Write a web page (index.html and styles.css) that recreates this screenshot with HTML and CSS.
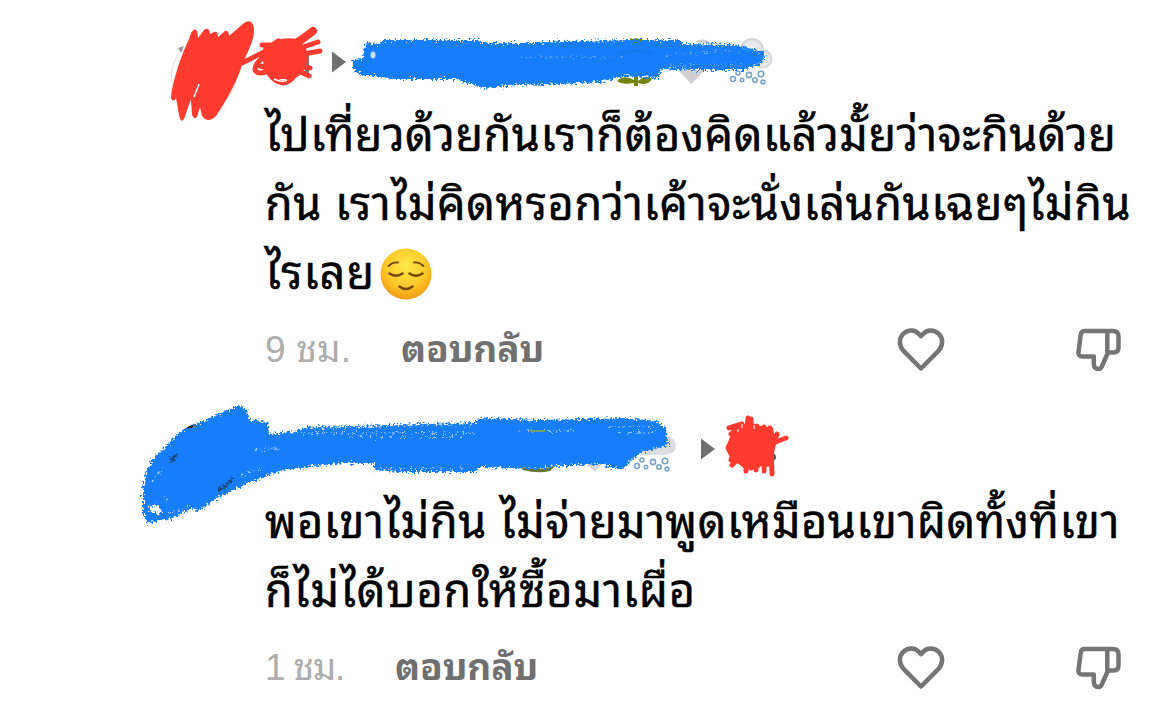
FILE: index.html
```html
<!DOCTYPE html>
<html lang="th">
<head>
    <meta charset="UTF-8">
    <meta name="viewport" content="width=device-width, initial-scale=1.0">
    <title>Comments</title>
    <link rel="stylesheet" href="styles.css">
</head>
<body>
    <!-- shared icons -->
    <svg class="icon-defs" width="0" height="0">
        <defs>
            <filter id="chalk" x="-5%" y="-15%" width="110%" height="130%">
                <feTurbulence type="fractalNoise" baseFrequency="0.45" numOctaves="2" seed="4" result="noise"/>
                <feDisplacementMap in="SourceGraphic" in2="noise" scale="9" xChannelSelector="R" yChannelSelector="G"/>
            </filter>
            <radialGradient id="face" cx="50%" cy="35%" r="65%">
                <stop offset="0" stop-color="#ffe94a"/>
                <stop offset="0.6" stop-color="#fdc928"/>
                <stop offset="1" stop-color="#f09a14"/>
            </radialGradient>
            <radialGradient id="cloud">
                <stop offset="0" stop-color="#f5f5f7"/>
                <stop offset="0.7" stop-color="#e6e7ea"/>
                <stop offset="1" stop-color="#cfd1d5"/>
            </radialGradient>
            <symbol id="heart" viewBox="0 0 48 44">
                <path d="M24 40.500 6.800 23.200C2 18 1.500 10.500 6.200 5.900 11 1.300 18 1.600 22 6L24 8.200 26 6C30 1.600 37 1.300 41.800 5.900 46.500 10.500 46 18 41.200 23.200Z"/>
            </symbol>
            <symbol id="dislike" viewBox="0 0 46 46">
                <path d="M8.500 4H37Q42.500 4 42.500 9.500V20.500Q42.500 25.500 37.500 25.500H32L25.800 39.500Q24.800 42 22.500 42 17.800 42 17.800 36.500V29.500H6.500Q2 29.500 2.500 25L4.700 8Q5.200 4 8.500 4ZM31.300 4V25.500"/>
            </symbol>
            <g id="flakes" fill="none" stroke="#79a4cc" stroke-width="1.600">
                <circle cx="4" cy="9" r="2.500"/>
                <circle cx="9" cy="3" r="2"/>
                <circle cx="13" cy="10" r="1.700"/>
                <circle cx="20" cy="5" r="2.600"/>
                <circle cx="26" cy="10" r="2.300"/>
                <circle cx="32" cy="4" r="2.800"/>
                <circle cx="34" cy="12" r="1.900"/>
            </g>
        </defs>
    </svg>

    <main>
        <div class="comment">
            <div class="comment-header">
                <svg class="scribble" width="1170" height="130" viewBox="0 0 1170 130">
                    <circle cx="204" cy="75" r="32.500" fill="#fff" stroke="#ddd"/>
                    <path d="M178 48l6-2-3 7z" fill="#999"/>
                    <path d="M190 97l12 9-10-2z" fill="#333"/>
                    <path d="M305 51h4v22h-4z" fill="#777"/>
                    <path d="M332 51.500V72.500L346 62Z" fill="#707070"/>
                    <path d="M617 81q7-7 17-1v-5h4v6q8-7 14-2-4 7-14 4v3h-4v-3q-12 2-17-2zM630 38l3 1 3-1 3 1 3-1v5h-12z" fill="#768512"/>
                    <path d="M678 70h27L691.500 84ZM694 42q11-6 17 2z" fill="#d0d0d2"/>
                    <circle cx="752" cy="50" r="12" fill="url(#cloud)"/>
                    <circle cx="763" cy="59" r="9.500" fill="url(#cloud)"/>
                    <use href="#flakes" x="729" y="70"/>
                    <path class="blue" d="M353 60 363 59 364 45 370 42 376 46 383 40 478 40 481 43 538 43 560 41 640 40 680 40 683 44 738 45 765 53 764 62 745 70 700 70 663 69 657 78 625 76 600 82 560 84 520 85 482 88 472 84 455 79 395 79 375 76 364 76 353 70Z"/>
                    <ellipse cx="373" cy="55" rx="2.500" ry="3.500" fill="#c5deff"/>
                    <path d="M618 54q18-7 36 0" fill="none" stroke="#1a6bd0" stroke-width="4" opacity=".3"/>
                    <g class="chalk-marks chalk-faint">
                        <path d="M520 57h105M665 56q45-5 75-5M670 65h82M738 47l20 6"/>
                    </g>
                    <path class="red" d="M171 98C172 84 180 58 189 39Q193 26 197 31L198 38 204 30Q209 26 210 34L214 32Q218 31 218 37L225 31Q229 30 229 36L244 23Q252 18 254 28C255 41 246 54 242 65C238 79 227 100 216 116Q208 124 202 116L200 107 197 117Q194 120 192 115L191 99 184 119Q181 124 179 115L176 98Q173 103 171 98Z"/>
                    <path class="red" d="M264 43 273 43 276 40Q287 37 297 39L306 48 308 60 302 74 293 79 276 79 266 73 262 58Z"/>
                    <path class="red-line" d="M242 63 266 51M262 45 272 45 278 41M298 44 314 31M294 50 318 42M298 55 320 51M280 49 302 38M266 56Q255 62 255 70 258 76 270 70M268 72Q274 82 283 83 290 82 295 75M298 66 310 68M299 71 309 76M260 66l8 2"/>
                    <path class="red-line red-thick" d="M301 40 313 31"/>
                    <path d="M194 97l5-13M274 79q8 4 13 1" fill="none" stroke="#fff" stroke-width="1.500"/>
                </svg>
            </div>
            <div class="comment-text">
                <p class="line line-a">ไปเที่ยวด้วยกันเราก็ต้องคิดแล้วมั้ยว่าจะกินด้วย</p>
                <p class="line line-b">กัน เราไม่คิดหรอกว่าเค้าจะนั่งเล่นกันเฉยๆไม่กิน</p>
                <p class="line line-c"><span>ไรเลย</span><svg class="emoji" viewBox="0 0 52 52">
                    <circle cx="26" cy="26" r="25.500" fill="url(#face)"/>
                    <g fill="none" stroke="#77450c" stroke-width="2.500" stroke-linecap="round">
                        <path d="M8.500 18Q13 13.500 18 14.500M34 14.500Q39 13.500 43.500 18" stroke-width="1.800"/>
                        <path d="M9.500 25.500Q16 30 22.500 25.500M29.500 25.500Q36 30 42.500 25.500"/>
                        <path d="M19.500 38.500Q26 43.500 32.500 38.500"/>
                    </g>
                </svg></p>
            </div>
            <div class="comment-actions">
                <span class="time time-a">9 ชม.</span>
                <span class="reply">ตอบกลับ</span>
                <svg class="icon icon-heart"><use href="#heart"/></svg>
                <svg class="icon icon-dislike"><use href="#dislike"/></svg>
            </div>
        </div>

        <div class="comment">
            <div class="comment-header">
                <svg class="scribble" width="1170" height="150" viewBox="0 387 1170 150">
                    <path d="M182 431q7-6 14-7l-3 6z" fill="#222"/>
                    <path d="M520 466q16 7 36-1l-6 6q-12 3-27-1z" fill="#66752a"/>
                    <path d="M587 464h15l-7 8z" fill="#d8d8da"/>
                    <path d="M642 437h28q6 3 6 9 0 8-12 9h-24z" fill="#dcdde0"/>
                    <use href="#flakes" x="633" y="457"/>
                    <path d="M701 438.500V459.500L715 449Z" fill="#707070"/>
                    <path class="blue" fill-rule="evenodd" d="M143 490 145 475 151 461 166 446 180 432 202 422 218 414 241 405 247 411 249 419 267 422 270 434 290 432 310 427 360 426 420 424 474 423 480 418 540 420 625 418 658 421 667 430 668 445 655 449 641 452 621 470 600 464 555 466 540 469 478 467 477 472 400 472 375 470 373 463 345 463 315 466 280 471 250 482 220 496 198 511 192 508 171 519 148 523 143 513ZM149 506 150 512 162 514 158 505Z"/>
                    <g class="chalk-marks">
                        <path d="M152 482q6-10 14-14M164 496q4 5 5 8M168 513q13-3 22-8M255 451q10-4 25-3M240 476q20-8 27-8"/>
                        <path d="M292 433H475M300 429q90-5 174-4M350 437h120M380 469h85M518 431h58M608 427h47M618 433h37"/>
                    </g>
                    <path d="M170 461l7-6M218 490q8-3 14-11" fill="none" stroke="#174a80" stroke-width="3" filter="url(#chalk)"/>
                    <path d="M530 431h15" stroke="#729e72" stroke-width="2"/>
                    <path d="M770 454h5q3 6-3 7z" fill="#555"/>
                    <path class="red" d="M732 426 745 424 749 420 756 425 773 428 775 444 773 466 755 468 744 468 733 460 729 445Z"/>
                    <path class="red-line" d="M729 428 742 424M731 434 744 427M748 418 746 440M751 419V468M757 426 756 470M732 439 728 448 733 458 741 450M732 465 747 450M740 432 731 460M746 450V471M764 440V471M771 450 772 474M764 427 760 449M770 428 773 440M777 434 770 455M766 446Q778 441 786 438"/>
                    <path d="M738 429v3M742 424v4M761 466v6M754 425v4" stroke="#fff" stroke-width="1"/>
                </svg>
            </div>
            <div class="comment-text">
                <p class="line line-d">พอเขาไม่กิน ไม่จ่ายมาพูดเหมือนเขาผิดทั้งที่เขา</p>
                <p class="line line-e">ก็ไม่ได้บอกให้ซื้อมาเผื่อ</p>
            </div>
            <div class="comment-actions">
                <span class="time time-b">1 ชม.</span>
                <span class="reply">ตอบกลับ</span>
                <svg class="icon icon-heart"><use href="#heart"/></svg>
                <svg class="icon icon-dislike"><use href="#dislike"/></svg>
            </div>
        </div>
    </main>
</body>
</html>
```
FILE: styles.css
```css
body {
    margin: 0;
    background-color: #fff;
    color: #000;
    font-family: "Liberation Sans", "Thonburi", "Noto Sans Thai Looped", "Loma", "Noto Sans Thai", sans-serif;
    overflow: hidden;
}

.icon-defs {
    position: absolute;
}

.comment {
    position: relative;
    padding-left: 265px;
}

.comment-header {
    height: 101px;
}

/* marker strokes lie over the avatar and the names */
.scribble {
    position: absolute;
    top: 0;
    left: 0;
}

.blue {
    fill: #177efb;
    filter: url(#chalk);
}

.red {
    fill: #ff3b30;
}

.red-line {
    fill: none;
    stroke: #ff3b30;
    stroke-width: 5;
    stroke-linecap: round;
    stroke-linejoin: round;
}

.red-thick {
    stroke-width: 8;
}

.chalk-marks {
    fill: none;
    stroke: #b8d7ff;
    stroke-width: 1.5;
    stroke-dasharray: 2 3 1 4;
    filter: url(#chalk);
}

.chalk-faint {
    opacity: 0.5;
}

.line {
    display: flex;
    align-items: center;
    height: 69px;
    margin: 0;
    font-size: 45px;
    line-height: 69px;
    white-space: nowrap;
    -webkit-text-stroke: 0.5px #000;
}

.line-a {
    letter-spacing: 0.5px;
}

.line-b {
    letter-spacing: 0.58px;
}

.line-c {
    letter-spacing: 1px;
}

.line-d {
    letter-spacing: 0.5px;
}

.line-e {
    letter-spacing: 0.9px;
}

.emoji {
    width: 52px;
    height: 52px;
    margin-left: 5px;
}

.comment-actions {
    display: flex;
    align-items: center;
    height: 74px;
    padding-top: 5px;
    white-space: nowrap;
}

.time,
.reply {
    margin-bottom: 10px;
    font-size: 37px;
}

.time {
    width: 136px;
    color: #adadad;
    letter-spacing: 0.2px;
}

.time-b {
    width: 130px;
    letter-spacing: -1.2px;
}

.reply {
    color: #707070;
    font-weight: bold;
    letter-spacing: -0.1px;
}

.icon {
    fill: none;
    stroke: #757575;
    stroke-width: 4.5;
    stroke-linejoin: round;
}

.icon-heart {
    width: 48px;
    height: 44px;
    margin-left: auto;
}

.icon-dislike {
    width: 46px;
    height: 46px;
    margin: 0 48px 0 131px;
}
```
